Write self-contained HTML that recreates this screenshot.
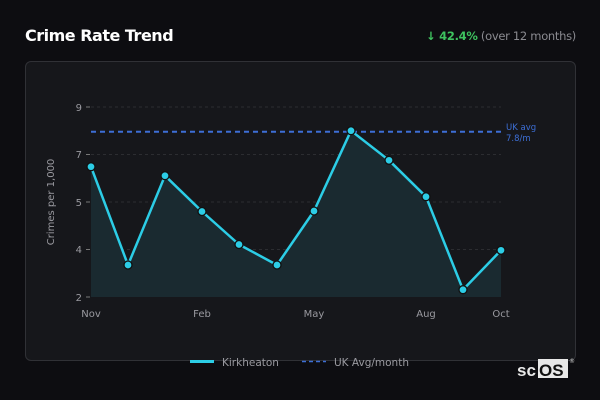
<!DOCTYPE html>
<html><head><meta charset="utf-8"><style>
html,body{margin:0;padding:0;width:600px;height:400px;background:#0d0d11;overflow:hidden;font-family:"DejaVu Sans","Liberation Sans",sans-serif;}
.t{position:absolute;left:25px;top:26px;font-size:16px;font-weight:bold;color:#fff;font-family:"DejaVu Sans",sans-serif;letter-spacing:-0.5px}
.r{position:absolute;right:24px;top:29px;font-size:11.5px;color:#8a8a90;letter-spacing:-0.3px}
.r b{color:#3ec25f}
.card{position:absolute;left:25px;top:61px;width:549px;height:298px;background:#16171b;border:1px solid #303136;border-radius:6px}
</style></head><body>
<div class="t">Crime Rate Trend</div>
<div class="r"><b>↓ 42.4%</b> (over 12 months)</div>
<div class="card"></div>
<svg width="600" height="400" style="position:absolute;left:0;top:0" font-family="DejaVu Sans, sans-serif">
<g stroke="#2c2d31" stroke-dasharray="3,3" stroke-width="1">
<line x1="91" x2="501" y1="107" y2="107"/><line x1="91" x2="501" y1="154.5" y2="154.5"/><line x1="91" x2="501" y1="202" y2="202"/><line x1="91" x2="501" y1="249.5" y2="249.5"/>
</g>
<g stroke="#777" stroke-width="1"><line x1="86" x2="90" y1="107" y2="107"/><line x1="86" x2="90" y1="154.5" y2="154.5"/><line x1="86" x2="90" y1="202" y2="202"/><line x1="86" x2="90" y1="249.5" y2="249.5"/><line x1="86" x2="90" y1="297" y2="297"/></g>
<g fill="#9a9aa0" font-size="10" text-anchor="end"><text x="82" y="111">9</text><text x="82" y="158">7</text><text x="82" y="206">5</text><text x="82" y="253">4</text><text x="82" y="301">2</text></g>
<text transform="translate(54,202) rotate(-90)" fill="#9a9aa0" font-size="10" text-anchor="middle">Crimes per 1,000</text>
<g fill="#9a9aa0" font-size="10" text-anchor="middle"><text x="91" y="317">Nov</text><text x="202" y="317">Feb</text><text x="314" y="317">May</text><text x="426" y="317">Aug</text><text x="501" y="317">Oct</text></g>
<polygon fill="#1a2a30" points="91,166.7 128,265 165,175.7 202,211.5 239,244.5 277,265 314,211 351,130.7 389,160.3 426,196.7 463,289.7 501,250.3 501,297 91,297"/>
<line x1="91" x2="501" y1="131.7" y2="131.7" stroke="#3d6fd6" stroke-width="2" stroke-dasharray="5,4"/>
<text x="506" y="130" fill="#3d6fd6" font-size="8.5">UK avg</text><text x="506" y="141" fill="#3d6fd6" font-size="8.5">7.8/m</text>
<polyline fill="none" stroke="#2ccde6" stroke-width="2.5" stroke-linejoin="round" points="91,166.7 128,265 165,175.7 202,211.5 239,244.5 277,265 314,211 351,130.7 389,160.3 426,196.7 463,289.7 501,250.3"/>
<g fill="#2ccde6" stroke="#111" stroke-width="1.3">
<circle cx="91" cy="166.7" r="4"/><circle cx="128" cy="265" r="4"/><circle cx="165" cy="175.7" r="4"/><circle cx="202" cy="211.5" r="4"/><circle cx="239" cy="244.5" r="4"/><circle cx="277" cy="265" r="4"/><circle cx="314" cy="211" r="4"/><circle cx="351" cy="130.7" r="4"/><circle cx="389" cy="160.3" r="4"/><circle cx="426" cy="196.7" r="4"/><circle cx="463" cy="289.7" r="4"/><circle cx="501" cy="250.3" r="4"/>
</g>
<line x1="190" x2="214" y1="361.5" y2="361.5" stroke="#2ccde6" stroke-width="3"/>
<text x="222" y="366" fill="#9a9aa0" font-size="10.5">Kirkheaton</text>
<line x1="302" x2="326" y1="361.5" y2="361.5" stroke="#3d6fd6" stroke-width="1.5" stroke-dasharray="4,3"/>
<text x="334" y="366" fill="#9a9aa0" font-size="10.5">UK Avg/month</text>
<rect x="538" y="359" width="30" height="19" fill="#e8e8e8"/>
<text x="517" y="376" fill="#e8e8e8" font-size="17" font-weight="bold" font-family="Liberation Sans, sans-serif">sc</text>
<text x="539" y="376" fill="#111" font-size="17" font-weight="bold" font-family="Liberation Sans, sans-serif">OS</text>
<text x="569" y="363" fill="#ccc" font-size="6">®</text>
</svg>
</body></html>
